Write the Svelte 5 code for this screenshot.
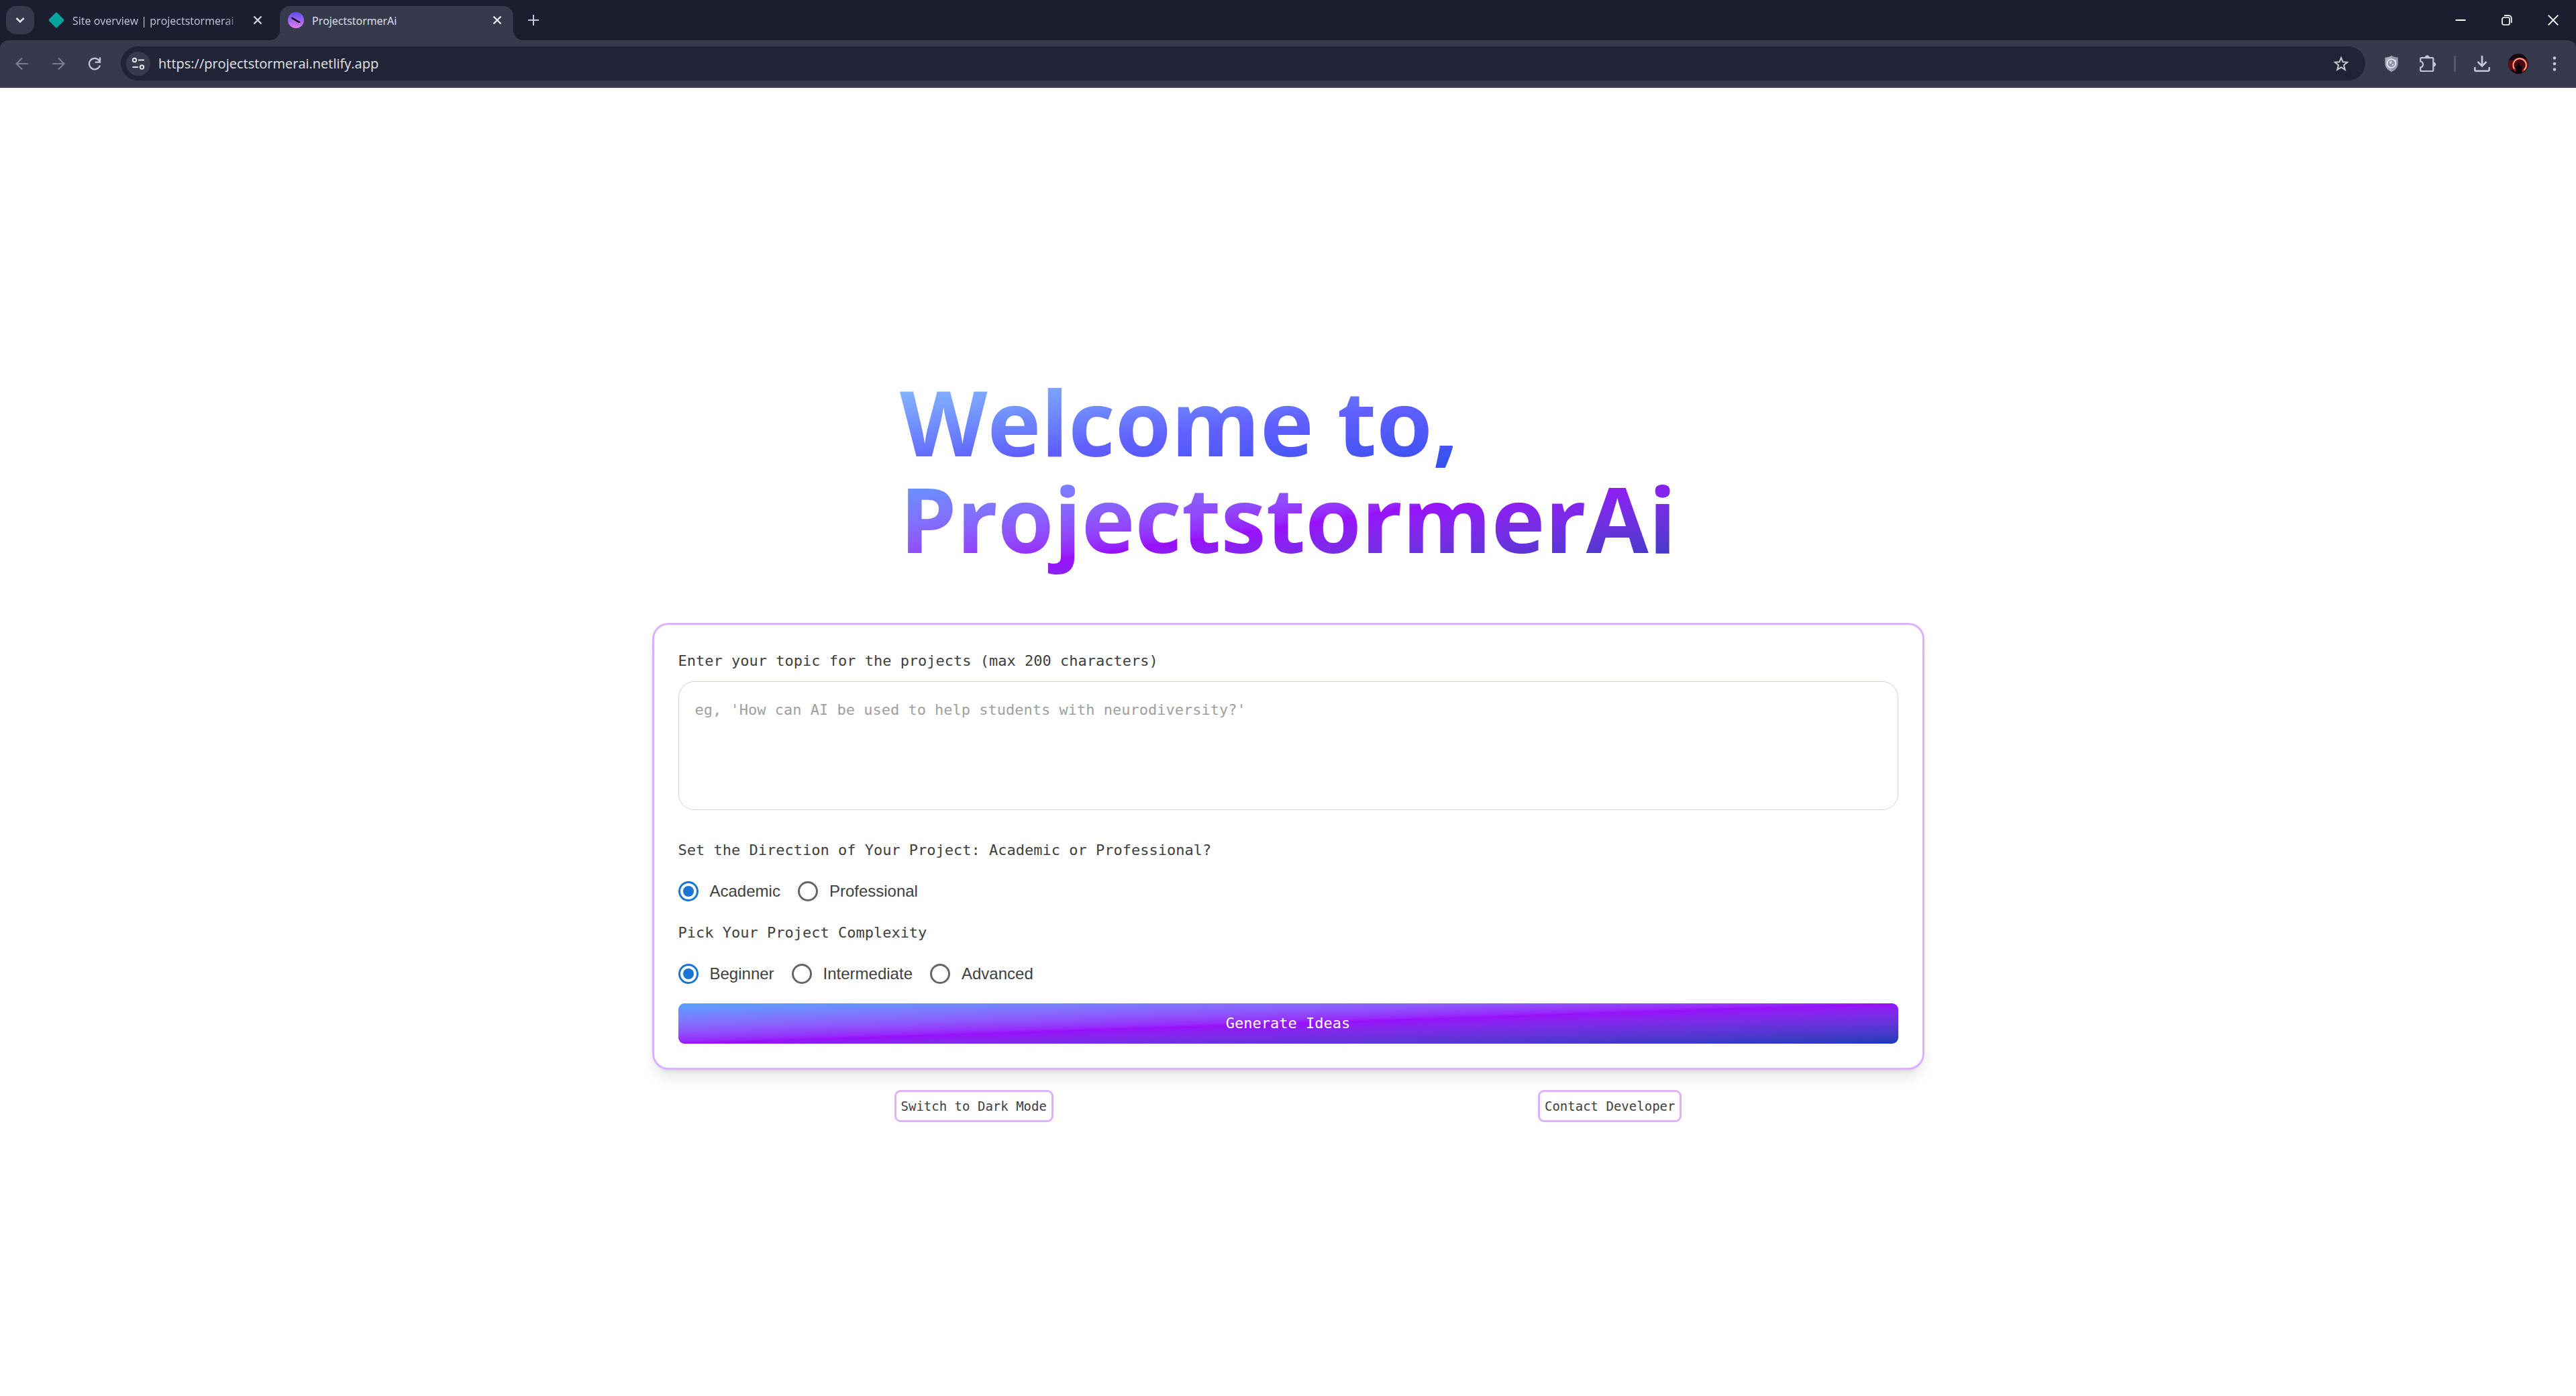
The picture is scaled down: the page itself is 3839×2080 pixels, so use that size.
<script>
  let topic = $state('');
  let direction = $state('Academic');
  let complexity = $state('Beginner');
  let url = $state('https://projectstormerai.netlify.app');

  const directions = ['Academic', 'Professional'];
  const levels = ['Beginner', 'Intermediate', 'Advanced'];
</script>

<div class="window">
  <header class="browser">
    <div class="tabbar">
      <button class="search-tabs" aria-label="Search tabs">
        <svg width="14" height="10" viewBox="0 0 14 10"><path d="M1.5 2l5.500 5.500L12.500 2" fill="none" stroke="#e3e3ea" stroke-width="2.600" /></svg>
      </button>
      <div class="tab">
        <svg class="favicon" width="24" height="24" viewBox="0 0 24 24"><path d="M10.600 1.300a2 2 0 0 1 2.800 0l9.300 9.300a2 2 0 0 1 0 2.800l-9.300 9.300a2 2 0 0 1-2.800 0l-9.300-9.300a2 2 0 0 1 0-2.800z" fill="#05a39c" /></svg>
        <span class="title fade">Site overview | projectstormerai</span>
        <button class="close" aria-label="Close tab">
          <svg width="14" height="14" viewBox="0 0 14 14"><path d="M1.500 1.500l11 11M12.500 1.500l-11 11" stroke="#cfd2e6" stroke-width="2.400" /></svg>
        </button>
      </div>
      <div class="tab active">
        <svg class="favicon" width="24" height="24" viewBox="0 0 24 24">
          <defs><linearGradient id="fav" x1="0" y1="0" x2="0" y2="1"><stop offset="0" stop-color="#5b4df5" /><stop offset="1" stop-color="#e47af0" /></linearGradient></defs>
          <circle cx="12" cy="12" r="12" fill="url(#fav)" />
          <path d="M6.500 9l11 6.500" stroke="#000" stroke-width="2.600" stroke-linecap="round" />
          <path d="M16.500 16.500l2-.4" stroke="#d9c9a0" stroke-width="1" />
        </svg>
        <span class="title">ProjectstormerAi</span>
        <button class="close" aria-label="Close tab">
          <svg width="14" height="14" viewBox="0 0 14 14"><path d="M1.500 1.500l11 11M12.500 1.500l-11 11" stroke="#e8e9f2" stroke-width="2.400" /></svg>
        </button>
      </div>
      <button class="new-tab" aria-label="New tab">
        <svg width="16" height="16" viewBox="0 0 16 16"><path d="M8 0v16M0 8h16" stroke="#c3c6de" stroke-width="2" /></svg>
      </button>
      <div class="controls">
        <button aria-label="Minimize"><svg width="16" height="16" viewBox="0 0 16 16"><path d="M.500 8h15" stroke="#fff" stroke-width="2" /></svg></button>
        <button aria-label="Restore"><svg width="16" height="16" viewBox="0 0 16 16" fill="none" stroke="#fff" stroke-width="1.700"><rect x="1" y="4" width="11" height="11" rx="2.500" /><path d="M4 1.200h6.800a4 4 0 0 1 4 4V12" /></svg></button>
        <button aria-label="Close"><svg width="16" height="16" viewBox="0 0 16 16"><path d="M.700 .700l14.600 14.600M15.300 .700L.700 15.300" stroke="#fff" stroke-width="1.800" /></svg></button>
      </div>
    </div>

    <div class="toolbar">
      <div class="nav">
        <button aria-label="Back"><svg width="20" height="20" viewBox="0 0 20 20" fill="none" stroke="#7b7e90" stroke-width="2.200"><path d="M19 10H2M10 1.500L1.500 10l8.500 8.500" /></svg></button>
        <button aria-label="Forward"><svg width="20" height="20" viewBox="0 0 20 20" fill="none" stroke="#7b7e90" stroke-width="2.200"><path d="M1 10h17M10 1.500l8.500 8.500-8.500 8.500" /></svg></button>
        <button aria-label="Reload"><svg width="20" height="20" viewBox="0 0 20 20" fill="none" stroke="#c3c6de" stroke-width="2.300"><path d="M18 12.500A8.200 8.200 0 1 1 16.600 5L18 7" /><path d="M18 .500v7.200h-7.200" /></svg></button>
      </div>
      <div class="omnibox">
        <button class="site" aria-label="View site information">
          <svg width="20" height="20" viewBox="0 0 20 20" fill="none" stroke="#e3e3ea" stroke-width="2"><circle cx="4.500" cy="4.500" r="2.700" /><path d="M10 4.500h9M1.500 15h8.500" /><circle cx="15.500" cy="15" r="2.700" /></svg>
        </button>
        <input class="url" type="text" aria-label="Address" spellcheck="false" bind:value={url} />
        <button class="star" aria-label="Bookmark this tab">
          <svg width="24" height="24" viewBox="0 0 24 24"><path d="M12 3l2.500 6.300 6.700.5-5.200 4.300 1.700 6.600L12 17.100l-5.700 3.600L8 14.100 2.800 9.800l6.700-.5z" fill="none" stroke="#c9cad0" stroke-width="2" /></svg>
        </button>
      </div>
      <div class="actions">
        <button aria-label="Shield extension">
          <svg width="20" height="24" viewBox="0 0 20 24"><path d="M10 0c3 1.800 6 2.500 9.500 2.700V12c0 6-4.500 9.500-9.500 12C5 21.500.500 18 .500 12V2.700C4 2.500 7 1.800 10 0z" fill="#a9aebd" /><path d="M10 0c3 1.800 6 2.500 9.500 2.700V12c0 6-4.500 9.500-9.500 12z" fill="#949aac" /><circle cx="10" cy="11.500" r="6.300" fill="#8d94a8" stroke="#eef0f5" stroke-width="1.600" /><path d="M6.500 9l3-1.500 1.500 2-2 2.500-2-.8zM10.500 12.500l3-.5-1.500 3.500z" fill="#d5d9e2" /><path d="M13 6l2.500 2.500L17 6.500" fill="none" stroke="#eef0f5" stroke-width="1.200" /></svg>
        </button>
        <button aria-label="Extensions">
          <svg width="26" height="26" viewBox="0 0 26 26"><path d="M3.500 4.200H20a1.300 1.300 0 0 1 1.300 1.300V22.700a1.300 1.300 0 0 1-1.300 1.300H3.500a1.300 1.300 0 0 1-1.300-1.300V18.500c5-.8 5-8.200 0-9V5.500a1.300 1.300 0 0 1 1.300-1.300z" fill="none" stroke="#c3c6de" stroke-width="2.200" /><path d="M9 4a3.200 3.200 0 0 1 6.400 0zM21.500 10.800a3.200 3.200 0 0 1 0 6.400z" fill="#c3c6de" stroke="#c3c6de" /></svg>
        </button>
        <span class="rule"></span>
        <button aria-label="Downloads">
          <svg width="24" height="24" viewBox="0 0 24 24" fill="none" stroke="#c3c6de" stroke-width="2.600"><path d="M12 0v15M5.500 9l6.500 6.500L18.500 9M1.300 17v4a1.700 1.700 0 0 0 1.700 1.700h18a1.700 1.700 0 0 0 1.700-1.700v-4" /></svg>
        </button>
        <button aria-label="Profile">
          <svg width="30" height="30" viewBox="0 0 30 30"><defs><clipPath id="av"><circle cx="15" cy="15" r="15" /></clipPath></defs><g clip-path="url(#av)"><rect width="30" height="30" fill="#170a12" /><path d="M0 10h8v14H0zM24 8h6v14h-6z" fill="#5e0d12" /><circle cx="17" cy="17" r="9.800" fill="#4a0a14" stroke="#b3231e" stroke-width="3" /><path d="M9 22.500A9.800 9.800 0 1 1 23.500 24.500" fill="none" stroke="#ffc4a8" stroke-width="1.600" /><path d="M11 30V19.500l3-2.500 1.500-5 1.500 4.500 3.500 3V30z" fill="#08060a" /></g></svg>
        </button>
        <button aria-label="Menu">
          <svg width="6" height="22" viewBox="0 0 6 22" fill="#c3c6de"><circle cx="3" cy="2.500" r="2.300" /><circle cx="3" cy="11" r="2.300" /><circle cx="3" cy="19.500" r="2.300" /></svg>
        </button>
      </div>
    </div>
  </header>

  <main>
    <h1>
      <span class="welcome">Welcome to,</span>
      <span class="brand">ProjectstormerAi</span>
    </h1>

    <form class="card" onsubmit={(e) => e.preventDefault()}>
      <label class="prompt" for="topic">Enter your topic for the projects (max 200 characters)</label>
      <textarea id="topic" maxlength="200" bind:value={topic} placeholder="eg, 'How can AI be used to help students with neurodiversity?'"></textarea>

      <div class="prompt" id="direction-label">Set the Direction of Your Project: Academic or Professional?</div>
      <div class="options" role="radiogroup" aria-labelledby="direction-label">
        {#each directions as option}
          <label><input type="radio" name="direction" value={option} bind:group={direction} />{option}</label>
        {/each}
      </div>

      <div class="prompt" id="complexity-label">Pick Your Project Complexity</div>
      <div class="options" role="radiogroup" aria-labelledby="complexity-label">
        {#each levels as option}
          <label><input type="radio" name="complexity" value={option} bind:group={complexity} />{option}</label>
        {/each}
      </div>

      <button class="generate" type="submit">Generate Ideas</button>
    </form>

    <div class="footer">
      <button class="small">Switch to Dark Mode</button>
      <button class="small">Contact Developer</button>
    </div>
  </main>
</div>

<style>
  :global(body) {
    background: #fff;
  }

  .window {
    --ui: 'Open Sans', 'Noto Sans', sans-serif;
    --mono: 'DejaVu Sans Mono', 'Liberation Mono', monospace;
    --ink: #404040;
    --purple: #dab2ff;
    display: flex;
    flex-direction: column;
    min-height: 100vh;
    font-family: var(--ui);
    color: var(--ink);
  }

  .window * {
    box-sizing: border-box;
  }

  svg {
    display: block;
    flex: none;
  }

  button {
    display: flex;
    align-items: center;
    justify-content: center;
    flex: none;
    padding: 0;
    border: 0;
    background: none;
    color: inherit;
    font: inherit;
    cursor: pointer;
  }

  .browser {
    background: #1a1e2f;
  }

  .tabbar {
    display: flex;
    align-items: center;
    height: 60px;
    padding-left: 9px;
  }

  .search-tabs {
    width: 42px;
    height: 42px;
    border-radius: 15px;
    background: #363a4c;
  }

  .tab {
    display: flex;
    align-items: center;
    width: 348px;
    height: 51px;
    margin-top: 9px;
    padding: 0 12px 9px;
    font-size: 16px;
    line-height: 24px;
    color: #c3c6de;
  }

  .tab:not(.active) {
    margin-left: 9px;
    margin-right: 9px;
  }

  .tab.active {
    position: relative;
    border-radius: 15px 15px 0 0;
    background: #363a4c;
    color: #e3e3ea;
  }

  .tab.active::before,
  .tab.active::after {
    content: '';
    position: absolute;
    bottom: 0;
    width: 15px;
    height: 15px;
  }

  .tab.active::before {
    right: 100%;
    background: radial-gradient(circle at 0 0, transparent 15px, #363a4c 15px);
  }

  .tab.active::after {
    left: 100%;
    background: radial-gradient(circle at 100% 0, transparent 15px, #363a4c 15px);
  }

  .title {
    flex: 1;
    min-width: 0;
    margin-left: 12px;
    margin-right: 12px;
    padding-top: 1px;
    overflow: hidden;
    white-space: nowrap;
  }

  .fade {
    mask-image: linear-gradient(to right, #000 calc(100% - 24px), transparent);
  }

  .close {
    width: 24px;
    height: 24px;
  }

  .new-tab {
    width: 42px;
    height: 42px;
    margin-left: 9px;
  }

  .controls {
    display: flex;
    align-self: stretch;
    margin-left: auto;
  }

  .controls button {
    width: 69px;
  }

  .toolbar {
    display: flex;
    align-items: center;
    height: 71px;
    padding: 0 11px 0 12px;
    border-bottom: 2px solid #44475a;
    border-radius: 12px 12px 0 0;
    background: #363a4c;
  }

  .nav {
    display: flex;
    gap: 12px;
    margin-right: 18px;
  }

  .nav button {
    width: 42px;
    height: 42px;
  }

  .omnibox {
    display: flex;
    flex: 1;
    align-items: center;
    height: 51px;
    padding: 0 24px 0 8px;
    border-radius: 26px;
    background: #212436;
  }

  .site {
    width: 36px;
    height: 36px;
    border-radius: 50%;
    background: #363a4c;
  }

  .url {
    flex: 1;
    min-width: 0;
    margin-left: 12px;
    padding: 0;
    border: 0;
    outline: 0;
    background: none;
    color: #e3e3ea;
    font-family: var(--ui);
    font-size: 20px;
    line-height: 30px;
  }

  .actions {
    display: flex;
    align-items: center;
    margin-left: 12px;
  }

  .actions button {
    width: 54px;
    height: 42px;
  }

  .actions button:last-child {
    width: 42px;
    margin-left: 6px;
  }

  .rule {
    width: 3px;
    height: 24px;
    margin: 0 12px;
    border-radius: 2px;
    background: #54586b;
  }

  main {
    display: flex;
    flex: 1;
    flex-direction: column;
    align-items: center;
    justify-content: center;
    padding: 16px 24px 0;
  }

  h1 {
    margin: 0 0 60px;
    font-size: 135px;
    font-weight: 700;
    line-height: 144px;
  }

  h1 span {
    display: block;
    background-clip: text;
    -webkit-background-clip: text;
    color: transparent;
  }

  .welcome {
    background-image: linear-gradient(to bottom right in oklab, #8ec5ff, #615fff, #1447e6);
  }

  .brand {
    padding-bottom: 24px;
    background-image: linear-gradient(to bottom right in oklab, #51a2ff, #9810fa, #193cb8);
  }

  .card {
    display: flex;
    flex-direction: column;
    gap: 12px;
    width: 100%;
    max-width: 1896px;
    padding: 36px;
    border: 3px solid var(--purple);
    border-radius: 24px;
    background: #fff;
    box-shadow:
      0 15px 22px -4px rgb(0 0 0 / 0.1),
      0 6px 9px -6px rgb(0 0 0 / 0.1);
  }

  .prompt {
    font-family: var(--mono);
    font-size: 22px;
    line-height: 36px;
  }

  textarea {
    height: 192px;
    margin: 0 0 30px;
    padding: 24px;
    border: 1px solid #d1d5dc;
    border-radius: 24px;
    outline: 0;
    background: #fff;
    color: var(--ink);
    font-family: var(--mono);
    font-size: 22px;
    line-height: 36px;
    resize: none;
  }

  textarea::placeholder {
    color: #9f9f9f;
  }

  .options {
    display: flex;
    gap: 26px;
    height: 63px;
  }

  .options label {
    display: flex;
    align-items: center;
    gap: 17px;
    font-family: 'Liberation Sans', Arial, sans-serif;
    font-size: 24px;
    line-height: 36px;
  }

  .options input {
    display: grid;
    place-items: center;
    width: 30px;
    height: 30px;
    margin: 0;
    appearance: none;
    border: 3px solid #666;
    border-radius: 50%;
  }

  .options input:checked {
    border-color: #1976d2;
  }

  .options input:checked::before {
    content: '';
    width: 16px;
    height: 16px;
    border-radius: 50%;
    background: #1976d2;
  }

  .generate {
    height: 60px;
    border-radius: 9px;
    background: linear-gradient(to bottom right in oklab, #51a2ff, #9810fa, #193cb8);
    color: #fff;
    font-family: var(--mono);
    font-size: 22px;
  }

  .footer {
    display: flex;
    justify-content: space-around;
    width: 100%;
    max-width: 1896px;
    margin-top: 30px;
  }

  .small {
    height: 48px;
    padding: 0 7px;
    border: 3px solid var(--purple);
    border-radius: 9px;
    background: #fff;
    font-family: var(--mono);
    font-size: 19px;
  }
</style>
